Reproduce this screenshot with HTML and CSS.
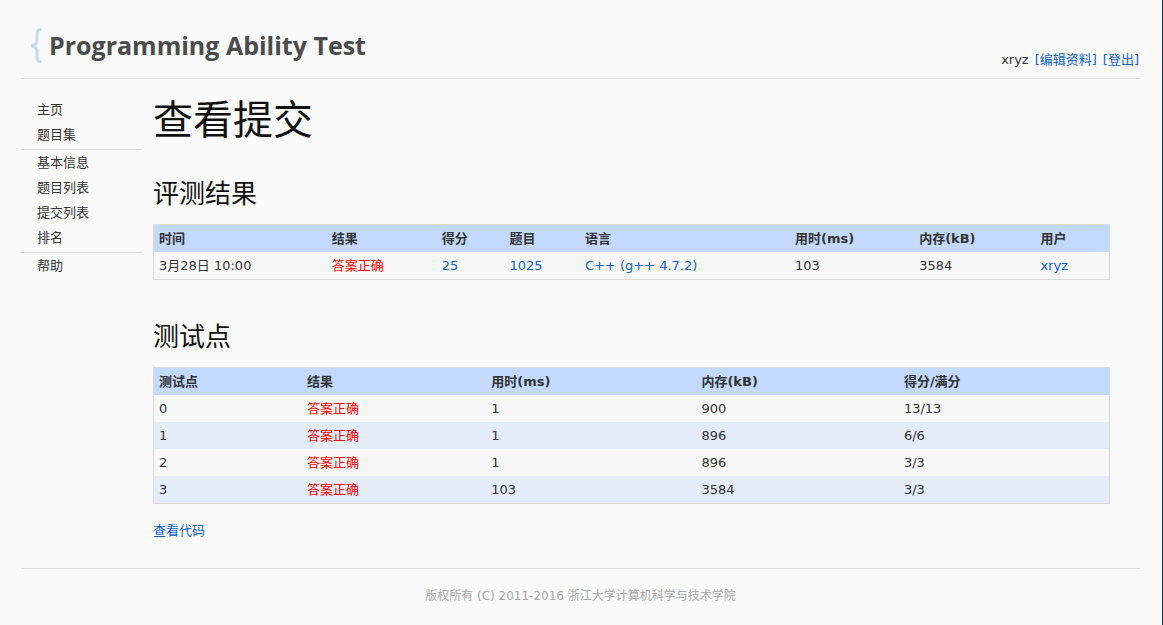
FILE: index.html
```html
<!DOCTYPE html>
<html lang="zh-CN">
<head>
<meta charset="utf-8">
<title>Programming Ability Test</title>
<link rel="stylesheet" href="styles.css">
</head>
<body>
<div class="page">
  <header class="header">
    <a class="logo" href="#">
      <svg class="logo-brace" viewBox="0 0 12 36" aria-hidden="true"><path d="M11.500 2.500H10.500Q7 2.500 7 6.500V13Q7 18 1 18.800Q7 19.600 7 24.500V30.500Q7 34.500 10.500 34.500H11.500"/></svg>
      <span class="logo-text">Programming Ability Test</span>
    </a>
    <div class="account"><span>xryz</span><a href="#">[编辑资料]</a><a href="#">[登出]</a></div>
  </header>
  <div class="columns">
    <nav class="sidebar">
      <ul class="menu">
        <li><a href="#">主页</a></li>
        <li><a href="#">题目集</a></li>
      </ul>
      <ul class="menu">
        <li><a href="#">基本信息</a></li>
        <li><a href="#">题目列表</a></li>
        <li><a href="#">提交列表</a></li>
        <li><a href="#">排名</a></li>
      </ul>
      <ul class="menu">
        <li><a href="#">帮助</a></li>
      </ul>
    </nav>
    <main class="content">
      <h1>查看提交</h1>
      <h2>评测结果</h2>
      <table class="grid">
        <colgroup><col class="c-time"><col class="c-result"><col class="c-score"><col class="c-problem"><col class="c-lang"><col class="c-used"><col class="c-memory"><col></colgroup>
        <thead>
          <tr><th>时间</th><th>结果</th><th>得分</th><th>题目</th><th>语言</th><th>用时(ms)</th><th>内存(kB)</th><th>用户</th></tr>
        </thead>
        <tbody>
          <tr><td>3月28日 10:00</td><td class="accepted">答案正确</td><td><a href="#">25</a></td><td><a href="#">1025</a></td><td><a href="#">C++ (g++ 4.7.2)</a></td><td>103</td><td>3584</td><td><a href="#">xryz</a></td></tr>
        </tbody>
      </table>
      <h2>测试点</h2>
      <table class="grid">
        <colgroup><col class="t-case"><col class="t-result"><col class="t-used"><col class="t-memory"><col></colgroup>
        <thead>
          <tr><th>测试点</th><th>结果</th><th>用时(ms)</th><th>内存(kB)</th><th>得分/满分</th></tr>
        </thead>
        <tbody>
          <tr><td>0</td><td class="accepted">答案正确</td><td>1</td><td>900</td><td>13/13</td></tr>
          <tr><td>1</td><td class="accepted">答案正确</td><td>1</td><td>896</td><td>6/6</td></tr>
          <tr><td>2</td><td class="accepted">答案正确</td><td>1</td><td>896</td><td>3/3</td></tr>
          <tr><td>3</td><td class="accepted">答案正确</td><td>103</td><td>3584</td><td>3/3</td></tr>
        </tbody>
      </table>
      <p class="source"><a href="#">查看代码</a></p>
    </main>
  </div>
  <footer class="footer">版权所有 (C) 2011-2016 浙江大学计算机科学与技术学院</footer>
</div>
</body>
</html>
```
FILE: styles.css
```css
* { box-sizing: border-box; }

body {
  margin: 0;
  background: #fafafa;
  color: #333;
  font: 13px/20px "DejaVu Sans", "Noto Sans CJK SC", sans-serif;
}

a { color: #0d62c9; text-decoration: none; }

.page {
  min-height: 100vh;
  padding: 26px 22px 0 21px;
  border-right: 1px solid #0b2850;
}

.header {
  display: flex;
  justify-content: space-between;
  align-items: flex-end;
  padding: 0 1px 8px 9px;
  border-bottom: 1px solid #dcdcdc;
}

.logo {
  display: flex;
  align-items: center;
  gap: 7px;
  height: 44px;
  padding-bottom: 6px;
  color: #4c4c4c;
}

.logo-brace {
  width: 12px;
  height: 36px;
  fill: none;
  stroke: #c4dcf0;
  stroke-width: 3;
}

.logo-text { font: bold 25px/38px "Open Sans", "Noto Sans", sans-serif; }

.account { display: flex; gap: 6px; }

.columns { display: flex; gap: 11px; }

.sidebar { flex: 0 0 121px; padding-top: 18px; }

.menu { margin: 0; padding: 0 0 2px; list-style: none; }
.menu + .menu { border-top: 1px solid #dcdcdc; }
.menu a { display: block; padding-left: 16px; line-height: 25px; color: #333; }

.content { flex: 1; padding-right: 30px; }

h1, h2 { margin: 0; color: #111; font-weight: 400; }
h1 { padding-top: 15px; font-size: 40px; line-height: 52px; }
h2 { margin-top: 35px; padding: 4px 0 12px; font-size: 26px; line-height: 36px; }
h1 + h2 { margin-top: 26px; }

.grid {
  width: 100%;
  table-layout: fixed;
  border-collapse: separate;
  border-spacing: 0;
  border: 1px solid #dadada;
}

.grid th, .grid td { height: 27px; padding: 0 5px; text-align: left; }
.grid th { background: #c3d9ff; }
.grid td { background: #f7f7f7; }
.grid tbody tr:nth-child(even) td { background: #e5ecf9; }
.grid .accepted { color: #f00; }

.c-time { width: 18.1%; }
.c-result { width: 11.5%; }
.c-score { width: 7.1%; }
.c-problem { width: 7.9%; }
.c-lang { width: 22%; }
.c-used { width: 13%; }
.c-memory { width: 12.7%; }

.t-case { width: 15.5%; }
.t-result { width: 19.3%; }
.t-used { width: 22%; }
.t-memory { width: 21.2%; }

.source { margin: 17px 0 27px; }

.footer {
  padding-top: 17px;
  border-top: 1px solid #dcdcdc;
  color: #a6a6a6;
  font-size: 12px;
  text-align: center;
}
```
